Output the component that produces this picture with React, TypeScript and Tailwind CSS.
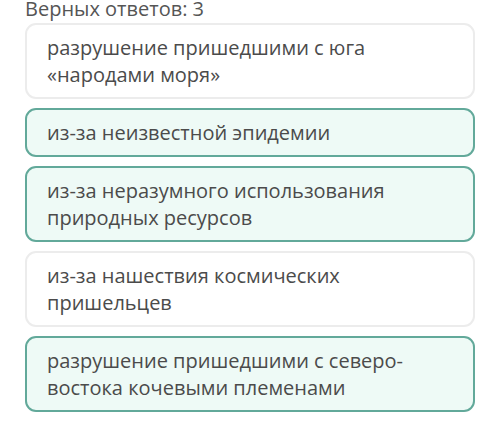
const answers = [
  { text: "разрушение пришедшими с юга «народами моря»", picked: false },
  { text: "из-за неизвестной эпидемии", picked: true },
  { text: "из-за неразумного использования природных ресурсов", picked: true },
  { text: "из-за нашествия космических пришельцев", picked: false },
  { text: "разрушение пришедшими с северо-востока кочевыми племенами", picked: true },
];

export default function App() {
  return (
    <div
      className="w-[500px] h-[427px] overflow-hidden bg-white text-[#4b4b4b]"
      style={{ fontFamily: '"Open Sans", "Noto Sans", sans-serif' }}
    >
      <div className="px-[25px]">
        <p className="-mt-[5px] text-[20px] leading-[28px] text-[#555555]">Верных ответов: 3</p>

        <div className="flex flex-col gap-[9px]">
          {answers.map((a) => (
            <div
              key={a.text}
              className={
                a.picked
                  ? "rounded-[11px] border-2 border-[#62a99a] bg-[#eefaf6] px-[20px] py-[9px]"
                  : "rounded-[11px] border-2 border-[#ececec] bg-white px-[20px] py-[9px]"
              }
            >
              <p className="text-[20px] leading-[27px] pr-[40px]">{a.text}</p>
            </div>
          ))}
        </div>
      </div>
    </div>
  );
}
